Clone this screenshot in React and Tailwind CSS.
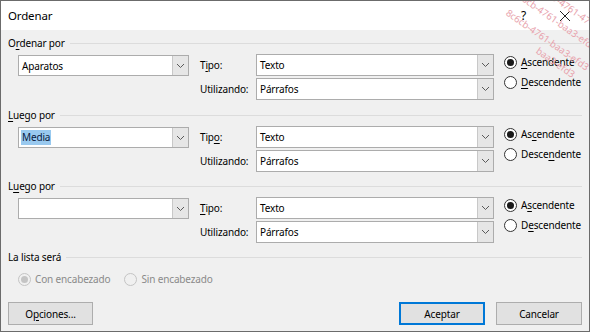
import React from "react";

function Acc({ text, i }) {
  if (i === undefined || i < 0) return <span>{text}</span>;
  return (
    <span>
      {text.slice(0, i)}
      <span className="underline underline-offset-2 decoration-1">{text[i]}</span>
      {text.slice(i + 1)}
    </span>
  );
}

function Chevron() {
  return (
    <svg width="9" height="6" viewBox="0 0 9 6">
      <polyline points="1,1 4.5,4.5 8,1" fill="none" stroke="#5a5a5a" strokeWidth="1" />
    </svg>
  );
}

function Combo({ value, wide, highlight }) {
  return (
    <div
      className={`flex border border-[#acacac] bg-white ${wide ? "w-[238px] h-[22px]" : "w-[171px] h-[21px] mt-[1px]"}`}
    >
      <div className="flex-1 flex items-center pl-[2px]">
        {highlight ? (
          <span className="bg-[#99c9ef] text-[#0a1a40] px-[1px] leading-[15px]">{value}</span>
        ) : (
          <span className="pl-[1px]">{value}</span>
        )}
      </div>
      <div className="w-[16px] border-l border-[#c8c8c8] bg-[#e6e6e6] flex items-center justify-center">
        <Chevron />
      </div>
    </div>
  );
}

function Radio({ checked, disabled, label, i }) {
  return (
    <div className="flex items-center h-[20px]">
      <span
        className={`w-[13px] h-[13px] rounded-full border flex items-center justify-center ${
          disabled ? "border-[#c4c4c4] bg-[#f0f0f0]" : "border-[#333333] bg-white"
        }`}
      >
        {checked && (
          <span className={`w-[7px] h-[7px] rounded-full ${disabled ? "bg-[#c4c4c4]" : "bg-[#1a1a1a]"}`} />
        )}
      </span>
      <span className={`ml-[4px] ${disabled ? "text-[#8a8a8a]" : ""}`}>
        <Acc text={label} i={i} />
      </span>
    </div>
  );
}

function SectionLabel({ text, i }) {
  return (
    <div className="flex items-center h-[16px] gap-[5px]">
      <Acc text={text} i={i} />
      <div className="flex-1 h-0 border-t border-[#dcdcdc] mr-[7px]" />
    </div>
  );
}

function Section({ title, ti, value, highlight, tipoI, ascI, descI, h }) {
  return (
    <div className={h}>
      <SectionLabel text={title} i={ti} />
      <div className="flex mt-[3px]">
        <div className="ml-[10px]">
          <Combo value={value} highlight={highlight} />
        </div>
        <div className="ml-[11px] grid grid-cols-[56px_238px] gap-y-[2px] items-center">
          <div><Acc text="Tipo:" i={tipoI} /></div>
          <Combo value="Texto" wide />
          <div>Utilizando:</div>
          <Combo value="Párrafos" wide />
        </div>
        <div className="ml-[10px] -mt-[2px]">
          <Radio checked label="Ascendente" i={ascI} />
          <Radio label="Descendente" i={descI} />
        </div>
      </div>
    </div>
  );
}

function Btn({ children, primary, w }) {
  return (
    <div
      className={`h-[23px] ${w} flex items-center justify-center bg-[#e1e1e1] border ${
        primary ? "border-[#0078d7] shadow-[inset_0_0_0_1px_#0078d7]" : "border-[#adadad]"
      }`}
    >
      {children}
    </div>
  );
}

export default function App() {
  return (
    <div className="w-[590px] h-[332px] relative overflow-hidden border border-[#6b6b6b] bg-[#f0f0f0] text-[10px] tracking-[-0.15px] text-black font-['Noto_Sans','Open_Sans',sans-serif] leading-none">
      <div className="h-[29px] bg-white flex items-center pl-[7px] pr-[18px]">
        <span className="text-[11.5px]">Ordenar</span>
        <div className="flex-1" />
        <span className="text-[12px] mr-[33px]">?</span>
        <svg width="12" height="12" viewBox="0 0 12 12">
          <line x1="1" y1="1" x2="11" y2="11" stroke="#222" strokeWidth="1" />
          <line x1="11" y1="1" x2="1" y2="11" stroke="#222" strokeWidth="1" />
        </svg>
      </div>
      <div className="pl-[7px] pt-[5px]">
        <Section h="h-[72px]" title="Ordenar por" ti={1} value="Aparatos" tipoI={1} ascI={0} descI={0} />
        <Section h="h-[71px]" title="Luego por" ti={0} value="Media" highlight tipoI={3} ascI={2} descI={5} />
        <Section h="h-[71px]" title="Luego por" ti={1} value="" tipoI={0} ascI={1} descI={1} />
        <SectionLabel text="La lista será" />
        <div className="flex ml-[10px] mt-[4px]">
          <Radio checked disabled label="Con encabezado" />
          <div className="ml-[14px]">
            <Radio disabled label="Sin encabezado" />
          </div>
        </div>
        <div className="flex mt-[13px] pr-[7px]">
          <Btn w="w-[85px]">
            <Acc text="Opciones..." i={1} />
          </Btn>
          <div className="flex-1" />
          <Btn primary w="w-[86px]">Aceptar</Btn>
          <div className="w-[11px]" />
          <Btn w="w-[86px]">Cancelar</Btn>
        </div>
      </div>
      <div className="pointer-events-none absolute inset-0 overflow-hidden text-[9.5px] text-[#e8a3ad] tracking-normal">
        <div className="absolute left-[548px] top-[-12px] rotate-[35deg] origin-left whitespace-nowrap">
          cb-4761-47
        </div>
        <div className="absolute left-[522px] top-[-8px] rotate-[35deg] origin-left whitespace-nowrap">
          6cb-4761-baa3-efd3-8c
        </div>
        <div className="absolute left-[506px] top-[6px] rotate-[35deg] origin-left whitespace-nowrap">
          8c6cb-4761-baa3-efd3
        </div>
        <div className="absolute left-[536px] top-[44px] rotate-[35deg] origin-left whitespace-nowrap">
          baa3-efd3
        </div>
      </div>
    </div>
  );
}
